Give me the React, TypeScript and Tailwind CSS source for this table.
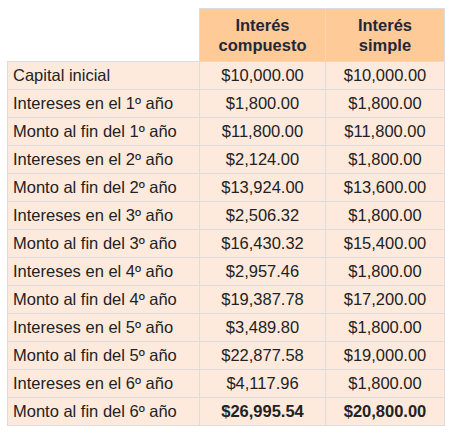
import React from 'react';

const rows: [string, string, string][] = [
  ['Capital inicial', '$10,000.00', '$10,000.00'],
  ['Intereses en el 1º año', '$1,800.00', '$1,800.00'],
  ['Monto al fin del 1º año', '$11,800.00', '$11,800.00'],
  ['Intereses en el 2º año', '$2,124.00', '$1,800.00'],
  ['Monto al fin del 2º año', '$13,924.00', '$13,600.00'],
  ['Intereses en el 3º año', '$2,506.32', '$1,800.00'],
  ['Monto al fin del 3º año', '$16,430.32', '$15,400.00'],
  ['Intereses en el 4º año', '$2,957.46', '$1,800.00'],
  ['Monto al fin del 4º año', '$19,387.78', '$17,200.00'],
  ['Intereses en el 5º año', '$3,489.80', '$1,800.00'],
  ['Monto al fin del 5º año', '$22,877.58', '$19,000.00'],
  ['Intereses en el 6º año', '$4,117.96', '$1,800.00'],
  ['Monto al fin del 6º año', '$26,995.54', '$20,800.00'],
];

const App = () => {
  return (
    <div className="w-[451px] h-[436px] bg-white pt-[8px] pl-[7px] font-['Liberation_Sans',Arial,sans-serif] text-[16.5px] text-[#222]">
      <table className="border-collapse table-fixed">
        <colgroup>
          <col className="w-[192px]" />
          <col className="w-[126px]" />
          <col className="w-[119px]" />
        </colgroup>
        <thead>
          <tr className="h-[53px]">
            <th></th>
            <th className="bg-[#fdca98] border border-[#dcdcdc] font-bold text-[#1e2838] leading-[20px] text-center">
              Interés
              <br />
              compuesto
            </th>
            <th className="bg-[#fdca98] border border-[#dcdcdc] font-bold text-[#1e2838] leading-[20px] text-center">
              Interés
              <br />
              simple
            </th>
          </tr>
        </thead>
        <tbody>
          {rows.map((r, i) => {
            const last = i === rows.length - 1;
            return (
              <tr key={i} className="h-[28px] bg-[#fdeadc]">
                <td className="border border-[#dcdcdc] pl-[5px] text-left">{r[0]}</td>
                <td className={`border border-[#dcdcdc] text-center ${last ? 'font-bold' : ''}`}>{r[1]}</td>
                <td className={`border border-[#dcdcdc] text-center ${last ? 'font-bold' : ''}`}>{r[2]}</td>
              </tr>
            );
          })}
        </tbody>
      </table>
    </div>
  );
};

export default App;
